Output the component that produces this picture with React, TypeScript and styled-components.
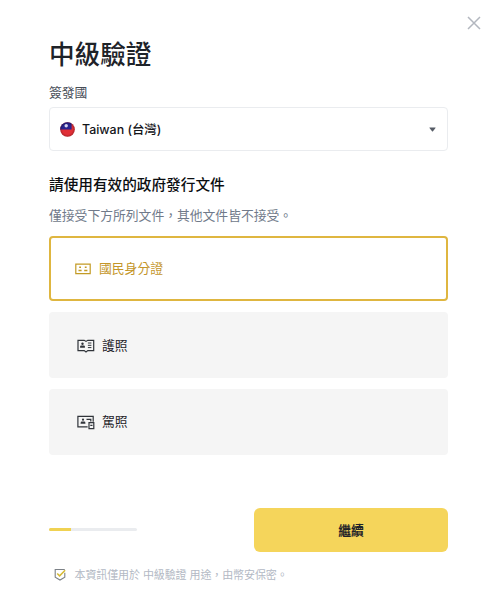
import React from 'react';
import styled, { createGlobalStyle, css } from 'styled-components';

const GlobalStyle = createGlobalStyle`
  * { box-sizing: border-box; }
  body {
    margin: 0;
    background: #fff;
    font-family: Inter, "Noto Sans CJK TC", sans-serif;
    color: #1e2329;
  }
  button { font: inherit; cursor: pointer; }
`;

const Dialog = styled.main`
  position: relative;
  width: 500px;
  height: 608px;
  padding: 36px 52px 0 49px;
  display: flex;
  flex-direction: column;
  background: #fff;
`;

const CloseButton = styled.button`
  position: absolute;
  top: 16px;
  right: 19px;
  width: 14px;
  height: 14px;
  padding: 0;
  border: 0;
  background: none;
  svg { display: block; }
`;

const Title = styled.h1`
  margin: 0;
  font-size: 25.6px;
  line-height: 38px;
  font-weight: 500;
  white-space: nowrap;
`;

const Label = styled.label`
  margin-top: 9px;
  font-size: 12.8px;
  line-height: 20px;
  color: #474d57;
`;

const Select = styled.button`
  margin-top: 4px;
  width: 100%;
  height: 44px;
  flex: none;
  padding: 0 11px 0 10px;
  display: flex;
  align-items: center;
  border: 1px solid #eaecef;
  border-radius: 4px;
  background: #fff;
  color: #14151a;
`;

const SelectValue = styled.span`
  flex: 1;
  margin-left: 7px;
  padding-top: 1px;
  text-align: left;
  font-size: 12.4px;
  line-height: 20px;
  font-weight: 500;
`;

const Heading = styled.h2`
  margin: 22px 0 0;
  font-size: 14.65px;
  line-height: 24px;
  font-weight: 500;
  color: #0b0e11;
`;

const Hint = styled.p`
  margin: 9px 0 0;
  font-size: 12.8px;
  line-height: 20px;
  color: #707a8a;
`;

const Options = styled.div`
  margin-top: 9.5px;
  display: flex;
  flex-direction: column;
  gap: 11.3px;
`;

const Option = styled.button<{ $selected?: boolean }>`
  width: 100%;
  height: 65.5px;
  padding: 1px 28px 0;
  display: flex;
  align-items: center;
  gap: 7px;
  border: 0;
  border-radius: 4px;
  background: #f5f5f5;
  color: #1e2329;
  font-size: 12.8px;
  line-height: 20px;
  svg { flex: none; }
  ${({ $selected }) =>
    $selected &&
    css`
      padding: 1px 24px 0;
      gap: 8px;
      border: 2px solid #dfb640;
      background: #fff;
      color: #c4962a;
    `}
`;

const Footer = styled.footer`
  margin-top: 53.4px;
  display: flex;
  align-items: center;
  justify-content: space-between;
`;

const Track = styled.div`
  width: 88px;
  height: 3px;
  border-radius: 2px;
  background: #eaecef;
  overflow: hidden;
`;

const Progress = styled.div`
  width: 25%;
  height: 100%;
  background: #f0d252;
`;

const ContinueButton = styled.button`
  width: 194px;
  height: 44px;
  padding: 0 0 1px;
  border: 0;
  border-radius: 6px;
  background: #f5d55b;
  color: #1e2329;
  font-size: 12.8px;
  font-weight: 700;
`;

const Note = styled.div`
  margin: 14px 0 0 5px;
  display: flex;
  align-items: center;
  gap: 8.5px;
  font-size: 11px;
  letter-spacing: -0.1px;
  line-height: 18px;
  color: #b3b9c4;
  white-space: nowrap;
`;

const CloseIcon = () => (
  <svg width="14" height="14" viewBox="0 0 14 14" fill="none" stroke="#b3b7bf" strokeWidth="1.5">
    <path d="M1 1l12 12M13 1L1 13" />
  </svg>
);

const TaiwanFlag = () => (
  <svg width="15" height="15" viewBox="0 0 15 15">
    <defs>
      <clipPath id="disc"><circle cx="7.5" cy="7.5" r="7.3" /></clipPath>
      <radialGradient id="shade">
        <stop offset=".65" stopColor="#000" stopOpacity="0" />
        <stop offset="1" stopColor="#000" stopOpacity=".25" />
      </radialGradient>
    </defs>
    <g clipPath="url(#disc)">
      <path fill="#e12f36" d="M0 0h15v15H0z" />
      <path fill="#29238f" d="M0 0h11.6v7.4H0z" />
      <circle cx="6.2" cy="3.8" r="1.7" fill="#d7d6f1" />
      <path fill="url(#shade)" d="M0 0h15v15H0z" />
    </g>
  </svg>
);

const CaretIcon = () => (
  <svg width="7" height="5" viewBox="0 0 7 5">
    <path fill="#565c66" d="M.7.4h5.6q.6 0 .2.6L4 4.3q-.5.5-1 0L.5 1Q.1.4.7.4z" />
  </svg>
);

const IdCardIcon = () => (
  <svg width="16" height="12" viewBox="0 0 16 12" fill="none" stroke="#c39b25">
    <path strokeWidth="1.2" d="M.8 1.1h14.4v9.6H.8z" />
    <path strokeWidth="1.6" d="M4.2 4.3h1.8M9.8 4.3h1.8" />
    <path strokeWidth="1.5" d="M3.5 7.6h3.1M9.2 7.6h3.2" />
  </svg>
);

const PassportIcon = () => (
  <svg width="18" height="14" viewBox="0 0 18 14" fill="none" stroke="#30343a" strokeWidth="1.2">
    <path d="M1 1.3h6.2L9 2.4l1.8-1.1h5.9v10.3h-5.9L9 13l-1.8-1.4H1z" />
    <circle cx="5.5" cy="4.7" r="1.2" fill="#30343a" stroke="none" />
    <path fill="#30343a" stroke="none" d="M3.1 8.8V7.5q0-1 1-1h2.8q1 0 1 1v1.3z" />
    <path strokeWidth="1" d="M10.9 4h3.5M10.9 6.3h3.5M10.9 8.6h3.5" />
  </svg>
);

const LicenseIcon = () => (
  <svg width="18" height="15" viewBox="0 0 18 15" fill="none" stroke="#30343a" strokeWidth="1.2">
    <path d="M10.6 11.8H.9V1.3h15.3v5.4" />
    <circle cx="6" cy="4.7" r="1.1" fill="#30343a" stroke="none" />
    <path fill="#30343a" stroke="none" d="M3.6 8.8v-.9q0-1.3 1.3-1.3h2.3q1.2 0 1.2 1.3v.9z" />
    <path d="M9.5 4.3h4.3v2.2M12 7.7h4.8v6H12zM13.3 10.3h2.2" />
  </svg>
);

const ShieldIcon = () => (
  <svg width="12" height="13" viewBox="0 0 12 13" fill="none">
    <path stroke="#7c8187" strokeWidth="1.1" d="M10.8 4.7v4.6L6 12 1.2 9.3V1.5h9.6" />
    <path stroke="#d6ba35" strokeWidth="1.5" d="M3.2 5.5l2.4 2.4 5.5-5.6" />
  </svg>
);

const documents = [
  { name: '國民身分證', Icon: IdCardIcon },
  { name: '護照', Icon: PassportIcon },
  { name: '駕照', Icon: LicenseIcon },
];

export default function App() {
  const [selected, setSelected] = React.useState(0);
  return (
    <>
      <GlobalStyle />
      <Dialog lang="zh-Hant">
        <CloseButton aria-label="關閉"><CloseIcon /></CloseButton>
        <Title>中級驗證</Title>
        <Label htmlFor="country">簽發國</Label>
        <Select id="country">
          <TaiwanFlag />
          <SelectValue>Taiwan (台灣)</SelectValue>
          <CaretIcon />
        </Select>
        <Heading>請使用有效的政府發行文件</Heading>
        <Hint>僅接受下方所列文件，其他文件皆不接受。</Hint>
        <Options>
          {documents.map(({ name, Icon }, index) => (
            <Option key={name} $selected={index === selected} onClick={() => setSelected(index)}>
              <Icon />
              {name}
            </Option>
          ))}
        </Options>
        <Footer>
          <Track><Progress /></Track>
          <ContinueButton>繼續</ContinueButton>
        </Footer>
        <Note>
          <ShieldIcon />
          <span>本資訊僅用於 中級驗證 用途，由幣安保密。</span>
        </Note>
      </Dialog>
    </>
  );
}
